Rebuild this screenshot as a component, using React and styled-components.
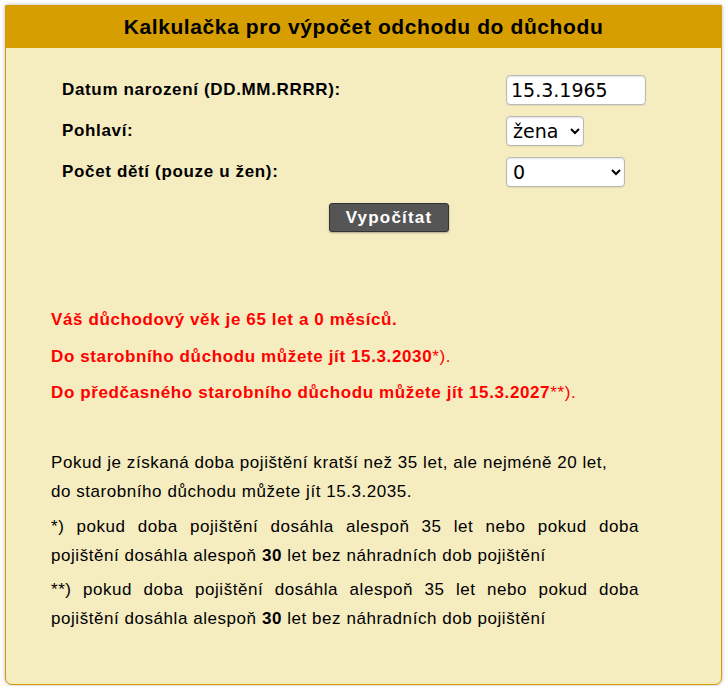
import React from "react";
import styled, { createGlobalStyle } from "styled-components";

const Global = createGlobalStyle`
  html, body { margin: 0; padding: 0; background: #ffffff; }
  body { font-family: "Liberation Sans", Arial, sans-serif; }
  * { box-sizing: border-box; }
`;

const Page = styled.div`
  padding: 5px 5px 1px 5px;
  width: 727px;
`;

const Card = styled.div`
  width: 717px;
  height: 680px;
  background: #f5ecc0;
  border: 1px solid #d49c00;
  border-radius: 0 0 7px 7px;
  box-shadow: 0 0 4px rgba(0, 0, 0, 0.28);
  overflow: hidden;
`;

const Header = styled.h1`
  margin: 0;
  height: 42px;
  background: #d69e00;
  color: #000;
  font-family: "Liberation Sans", Arial, sans-serif;
  font-size: 21px;
  font-weight: bold;
  text-align: center;
  line-height: 42px;
  letter-spacing: 0.6px;
`;

const Form = styled.form`
  display: grid;
  grid-template-columns: 444px auto;
  row-gap: 11px;
  align-items: center;
  padding: 27px 0 0 56px;
`;

const Label = styled.label`
  font-size: 17px;
  font-weight: bold;
  color: #000;
  letter-spacing: 0.65px;
`;

const fieldStyles = `
  height: 30px;
  background: #ffffff;
  border: 1px solid #b9b9b9;
  border-radius: 4px;
  box-shadow: inset 0 1px 2px rgba(0,0,0,0.12), 0 1px 1px rgba(0,0,0,0.08);
  font-family: "DejaVu Sans", Verdana, sans-serif;
  font-size: 19px;
  color: #000;
  margin: 0;
`;

const TextInput = styled.input`
  ${fieldStyles}
  width: 140px;
  padding: 0 4px;
`;

const Select = styled.select`
  ${fieldStyles}
  width: ${(p) => p.$w}px;
  padding: 0 2px;
  justify-self: start;
`;

const ButtonRow = styled.div`
  grid-column: 1 / span 2;
  display: flex;
  justify-content: center;
  padding: 5px 0 0 0;
  margin-left: -5px;
`;

const Button = styled.button`
  width: 120px;
  height: 29px;
  background: #555555;
  border: 1px solid #333333;
  border-radius: 3px;
  color: #ffffff;
  font-family: "Liberation Sans", Arial, sans-serif;
  font-size: 17px;
  font-weight: bold;
  letter-spacing: 1.2px;
  padding: 0;
  box-shadow: 0 1px 2px rgba(0,0,0,0.3);
`;

const Results = styled.div`
  padding: 78px 0 0 45px;
  display: flex;
  flex-direction: column;
  gap: 16.5px;
`;

const ResultLine = styled.p`
  margin: 0;
  color: #ff0000;
  font-size: 17px;
  font-weight: bold;
  line-height: 20px;
  letter-spacing: 0.62px;
`;

const Light = styled.span`
  font-weight: normal;
`;

const Notes = styled.div`
  padding: 45px 0 0 45px;
  width: 633px;
  display: flex;
  flex-direction: column;
  gap: 5.5px;
`;

const Note = styled.p`
  margin: 0;
  font-size: 17px;
  line-height: 29px;
  color: #000;
  text-align: justify;
  letter-spacing: 0.55px;
`;

export default function App() {
  return (
    <>
      <Global />
      <Page>
        <Card>
          <Header>Kalkulačka pro výpočet odchodu do důchodu</Header>
          <Form onSubmit={(e) => e.preventDefault()}>
            <Label htmlFor="dn">Datum narození (DD.MM.RRRR):</Label>
            <TextInput id="dn" type="text" defaultValue="15.3.1965" />
            <Label htmlFor="ph">Pohlaví:</Label>
            <Select id="ph" $w={78} defaultValue="zena">
              <option value="muz">muž</option>
              <option value="zena">žena</option>
            </Select>
            <Label htmlFor="pd">Počet dětí (pouze u žen):</Label>
            <Select id="pd" $w={119} defaultValue="0">
              <option value="0">0</option>
              <option value="1">1</option>
              <option value="2">2</option>
              <option value="3">3</option>
              <option value="4">4</option>
              <option value="5">5 a více</option>
            </Select>
            <ButtonRow>
              <Button type="submit">Vypočítat</Button>
            </ButtonRow>
          </Form>
          <Results>
            <ResultLine>Váš důchodový věk je 65 let a 0 měsíců.</ResultLine>
            <ResultLine>
              Do starobního důchodu můžete jít 15.3.2030<Light>*).</Light>
            </ResultLine>
            <ResultLine>
              Do předčasného starobního důchodu můžete jít 15.3.2027<Light>**).</Light>
            </ResultLine>
          </Results>
          <Notes>
            <Note>
              Pokud je získaná doba pojištění kratší než 35 let, ale nejméně 20 let,
              <br />
              do starobního důchodu můžete jít 15.3.2035.
            </Note>
            <Note>
              *) pokud doba pojištění dosáhla alespoň 35 let nebo pokud doba pojištění dosáhla alespoň <b>30</b> let bez náhradních dob pojištění
            </Note>
            <Note>
              **) pokud doba pojištění dosáhla alespoň 35 let nebo pokud doba pojištění dosáhla alespoň <b>30</b> let bez náhradních dob pojištění
            </Note>
          </Notes>
        </Card>
      </Page>
    </>
  );
}
